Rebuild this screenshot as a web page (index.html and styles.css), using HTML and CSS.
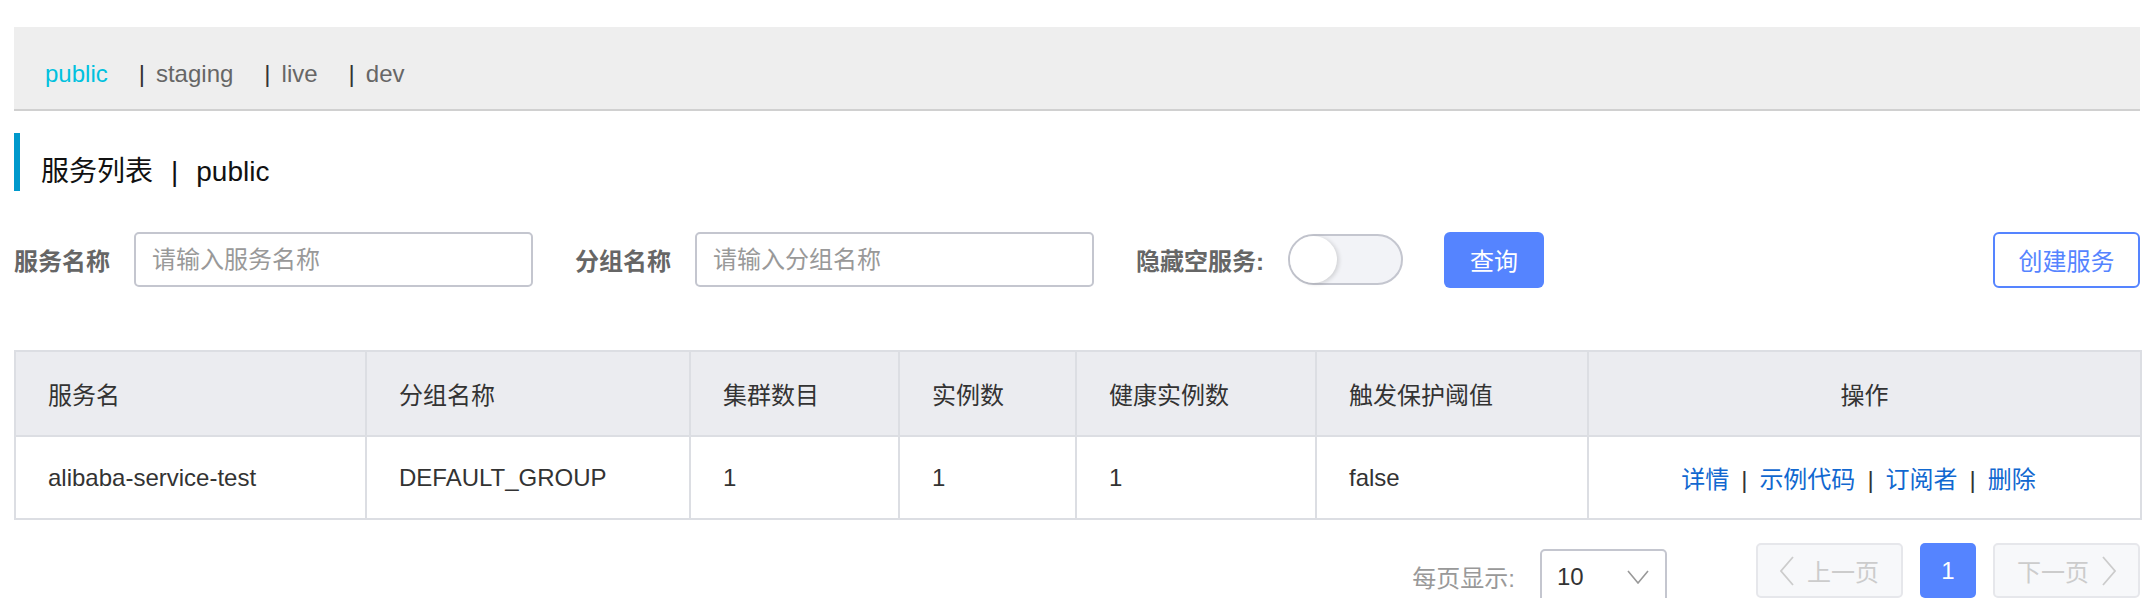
FILE: index.html
```html
<!DOCTYPE html>
<html lang="zh-CN">
<head>
  <meta charset="UTF-8">
  <title>服务列表</title>
  <link rel="stylesheet" href="styles.css">
</head>
<body>
  <div class="page">

    <!-- namespaces -->
    <div class="ns-bar">
      <span class="ns active">public</span>
      <span class="ns"><span class="bar">|</span>staging</span>
      <span class="ns"><span class="bar">|</span>live</span>
      <span class="ns"><span class="bar">|</span>dev</span>
    </div>

    <h1 class="page-title">服务列表<span class="sep">|</span>public</h1>

    <!-- filtri -->
    <form class="filter">
      <label class="field">
        <span class="field-label">服务名称</span>
        <input class="text-input" type="text" placeholder="请输入服务名称">
      </label>
      <label class="field">
        <span class="field-label">分组名称</span>
        <input class="text-input" type="text" placeholder="请输入分组名称">
      </label>
      <div class="field">
        <span class="field-label">隐藏空服务:</span>
        <span class="switch"><span class="knob"></span></span>
      </div>
      <button type="button" class="btn btn-primary">查询</button>
      <button type="button" class="btn btn-outline">创建服务</button>
    </form>

    <table class="svc-table">
      <colgroup>
        <col class="c-name"><col class="c-group"><col class="c-cluster"><col class="c-inst">
        <col class="c-healthy"><col class="c-threshold"><col class="c-ops">
      </colgroup>
      <thead>
        <tr>
          <th>服务名</th>
          <th>分组名称</th>
          <th>集群数目</th>
          <th>实例数</th>
          <th>健康实例数</th>
          <th>触发保护阈值</th>
          <th class="center">操作</th>
        </tr>
      </thead>
      <tbody>
        <tr>
          <td>alibaba-service-test</td>
          <td>DEFAULT_GROUP</td>
          <td>1</td>
          <td>1</td>
          <td>1</td>
          <td>false</td>
          <td class="center ops">
            <a href="#">详情</a><span class="sep">|</span><a href="#">示例代码</a><span class="sep">|</span><a href="#">订阅者</a><span class="sep">|</span><a href="#">删除</a>
          </td>
        </tr>
      </tbody>
    </table>

    <!-- paginazione -->
    <div class="pager-row">
      <div class="page-size">
        <span class="page-size-label">每页显示:</span>
        <div class="select">
          <span>10</span>
          <svg width="22" height="14" viewBox="0 0 22 14"><polyline points="1,1 11,13 21,1" fill="none" stroke="#999" stroke-width="1.6"/></svg>
        </div>
      </div>
      <div class="pager">
        <button type="button" class="pg-btn" disabled>
          <svg width="14" height="30" viewBox="0 0 14 30"><polyline points="13,1 1,15 13,29" fill="none" stroke="#ccc" stroke-width="1.8"/></svg>
          上一页
        </button>
        <button type="button" class="pg-num">1</button>
        <button type="button" class="pg-btn" disabled>
          下一页
          <svg width="14" height="30" viewBox="0 0 14 30"><polyline points="1,1 13,15 1,29" fill="none" stroke="#ccc" stroke-width="1.8"/></svg>
        </button>
      </div>
    </div>

  </div>
</body>
</html>
```

FILE: styles.css
```css
html, body {
  margin: 0; padding: 0;
  background: #fff;
  font-family: "Liberation Sans", "Noto Sans CJK SC", sans-serif;
  font-size: 24px; color: #333;
}
.page { padding: 27px 12px 0 14px; }

/* namespace bar */
.ns-bar {
  display: flex;
  background: #eee;
  border-bottom: 2px solid #d0d0d0;
  padding: 32px 0 20px 31px;
  line-height: 30px;
  color: #666;
}
.ns { margin-right: 31px; }
.ns.active { color: #00c1de; }
.ns .bar { color: #333; margin-right: 11px; }

/* titolo */
.page-title {
  margin: 22px 0 0;
  height: 58px; box-sizing: border-box;
  padding: 19px 0 0 21px;
  border-left: 6px solid #09c;
  font-size: 28px; font-weight: normal;
  line-height: 39px; color: #111;
}
.page-title .sep { margin: 0 18px; }

/* filtri */
.filter {
  display: flex; align-items: center;
  margin-top: 41px; height: 55px;
}
.field { display: flex; align-items: center; margin-right: 42px; }
.field-label { font-weight: bold; color: #666; margin-right: 24px; }
.text-input {
  width: 399px; height: 55px; box-sizing: border-box;
  border: 2px solid #c4c6cf; border-radius: 5px;
  padding: 0 16px;
  font: inherit; color: #333; outline: none;
}
.text-input::placeholder { color: #999; }
.switch {
  display: flex; align-items: center;
  width: 115px; height: 51px; box-sizing: border-box;
  border: 2px solid #c4c6cf; border-radius: 26px;
  background: #f2f3f7;
}
.knob {
  width: 47px; height: 47px; border-radius: 50%;
  background: #fff;
  box-shadow: 2px 1px 4px rgba(0,0,0,0.14);
}
.btn {
  height: 56px; box-sizing: border-box;
  border-radius: 6px; padding: 0;
  font: inherit; cursor: pointer;
}
.btn-primary {
  width: 100px; margin-left: -1px;
  background: #5584ff; border: none; color: #fff;
}
.btn-outline {
  width: 147px; margin-left: auto;
  background: #fff; border: 2px solid #5584ff; color: #5584ff;
}

/* tabella */
.svc-table {
  margin-top: 63px;
  width: 2126px;
  table-layout: fixed;
  border-collapse: collapse;
  border: 2px solid #dcdee3;
}
.c-name { width: 351px; }
.c-group { width: 324px; }
.c-cluster { width: 209px; }
.c-inst { width: 177px; }
.c-healthy { width: 240px; }
.c-threshold { width: 272px; }
.c-ops { width: 553px; }
.svc-table th, .svc-table td {
  border: 2px solid #dcdee3;
  padding: 0 32px;
  text-align: left;
  font-weight: normal;
  color: #333;
}
.svc-table thead tr { height: 85px; }
.svc-table tbody tr { height: 83px; }
.svc-table th { background: #ebecf0; }
.svc-table .center { text-align: center; }
.svc-table .ops { padding-right: 38px; padding-left: 26px; }
.svc-table a { color: #1168d0; text-decoration: none; }
.svc-table .sep { margin: 0 12px; color: #333; }

/* paginazione */
.pager-row {
  display: flex; justify-content: flex-end; align-items: center;
  margin-top: 23px; height: 55px;
}
.page-size { display: flex; align-items: center; margin: 12px 89px 0 0; }
.page-size-label { color: #999; margin-right: 25px; }
.select {
  display: flex; align-items: center; justify-content: space-between;
  width: 127px; height: 55px; box-sizing: border-box;
  border: 2px solid #c4c6cf; border-radius: 5px;
  padding: 0 16px 0 15px;
}
.pager { display: flex; align-items: center; gap: 17px; }
.pg-btn, .pg-num {
  height: 55px; box-sizing: border-box;
  border-radius: 5px; padding: 0;
  font: inherit;
}
.pg-btn {
  display: flex; align-items: center; justify-content: center; gap: 13px;
  width: 147px;
  background: #f7f8fa; border: 2px solid #e6e7eb; color: #ccc;
}
.pg-num {
  width: 56px;
  background: #5584ff; border: none; color: #fff;
}
```
